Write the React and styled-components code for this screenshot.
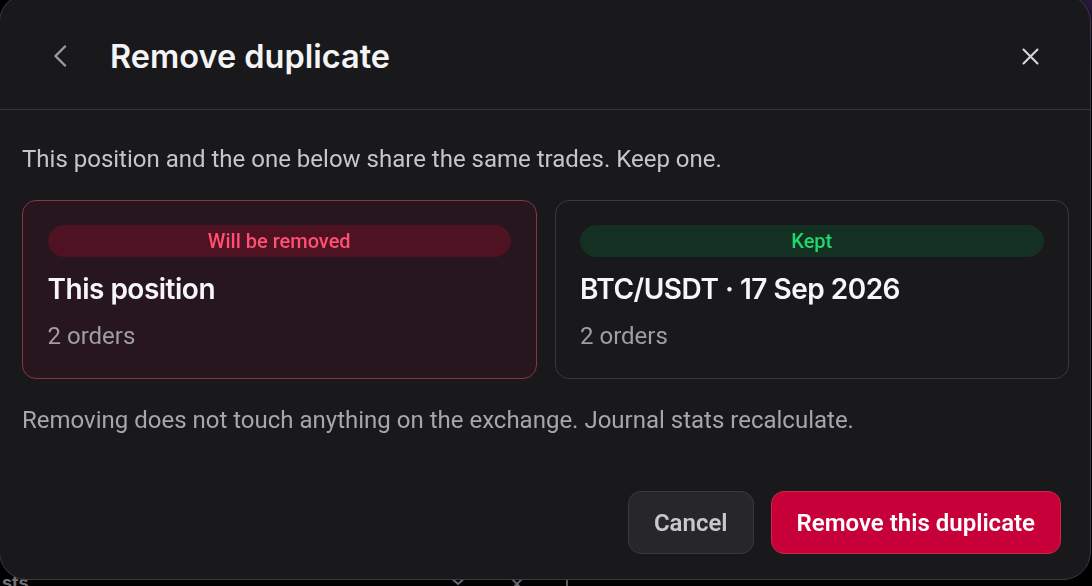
import React from "react";
import styled, { createGlobalStyle } from "styled-components";

const Global = createGlobalStyle`
  * { box-sizing: border-box; }
  html, body { margin: 0; padding: 0; background: #000; }
  body { font-family: "Roboto", "Liberation Sans", sans-serif; overflow: hidden; }
`;

const Page = styled.div`
  height: 100vh;
  background: radial-gradient(circle at 100% 0%, #2a1840 0, #000 60px);
  display: flex;
  flex-direction: column;
  justify-content: flex-end;
`;

const PageRow = styled.div`
  display: flex;
  align-items: flex-start;
  height: 10px;
  padding-left: 2px;
  color: #707074;
  font-family: "Inter", sans-serif;
  font-weight: 700;
  font-size: 18px;
  line-height: 18px;
`;

const PageLabel = styled.span`
  margin-top: -2px;
`;

const PageIcon = styled.span`
  display: flex;
  margin-left: ${(p) => p.$ml || 0}px;
`;

const Dialog = styled.div`
  position: fixed;
  top: -6px;
  left: -1px;
  width: 1092px;
  height: 586px;
  background: #19191b;
  border: 1px solid #3a3a42;
  border-radius: 28px;
  display: flex;
  flex-direction: column;
  overflow: hidden;
`;

const Header = styled.div`
  height: 115px;
  flex: none;
  display: flex;
  align-items: center;
  padding: 8px 40px 0 40px;
  border-bottom: 1px solid #34343a;
`;

const IconButton = styled.button`
  width: 40px;
  height: 40px;
  padding: 0;
  border: 0;
  background: transparent;
  display: flex;
  align-items: center;
  justify-content: center;
  cursor: pointer;
  flex: none;
`;

const Title = styled.h1`
  margin: 0 0 0 30px;
  flex: 1;
  font-family: "Inter", sans-serif;
  font-weight: 600;
  font-size: 32.5px;
  letter-spacing: 0;
  color: #f4f4f6;
`;

const Body = styled.div`
  flex: 1;
  display: flex;
  flex-direction: column;
  padding: 35px 21px 25px 22px;
`;

const Intro = styled.p`
  margin: 0;
  font-size: 24px;
  line-height: 28px;
  color: #c6c6ca;
`;

const Cards = styled.div`
  display: grid;
  grid-template-columns: 1fr 1fr;
  gap: 18px;
  margin-top: 27px;
`;

const Card = styled.div`
  border-radius: 14px;
  border: 1.5px solid ${(p) => (p.$tone === "remove" ? "#8a3447" : "#38383f")};
  background: ${(p) => (p.$tone === "remove" ? "#27161d" : "#19191b")};
  padding: 23.5px 24.5px 28px 24.5px;
`;

const Badge = styled.div`
  height: 32px;
  border-radius: 16px;
  display: flex;
  align-items: center;
  justify-content: center;
  font-size: 20px;
  font-weight: 500;
  background: ${(p) => (p.$tone === "remove" ? "#4e1222" : "#143022")};
  color: ${(p) => (p.$tone === "remove" ? "#ff4f72" : "#1fd66c")};
`;

const CardTitle = styled.div`
  margin-top: 14.5px;
  font-family: "Inter", sans-serif;
  font-weight: 600;
  font-size: 28px;
  letter-spacing: -0.5px;
  line-height: 36px;
  color: #f6f6f8;
`;

const CardMeta = styled.div`
  margin-top: 14.5px;
  font-size: 24px;
  line-height: 28px;
  color: #9e9ea4;
`;

const Note = styled.p`
  margin: 27px 0 0;
  font-size: 24px;
  line-height: 28px;
  color: #a6a6ab;
`;

const Actions = styled.div`
  margin-top: auto;
  display: flex;
  justify-content: flex-end;
  gap: 17px;
  padding-right: 8px;
`;

const Button = styled.button`
  height: 63px;
  padding: 0 25px;
  border-radius: 13px;
  font-family: "Roboto", sans-serif;
  font-size: 24px;
  font-weight: 600;
  cursor: pointer;
  border: 1.5px solid ${(p) => (p.$primary ? "#d4244e" : "#393940")};
  background: ${(p) => (p.$primary ? "#c8003a" : "#26262b")};
  color: ${(p) => (p.$primary ? "#ffffff" : "#c8c8cc")};
`;

const ChevronLeft = () => (
  <svg width="14" height="22" viewBox="0 0 14 22" fill="none">
    <polyline points="12,1.5 2.5,11 12,20.5" stroke="#9a9aa0" strokeWidth="2.4" strokeLinecap="round" strokeLinejoin="round" />
  </svg>
);

const CloseIcon = ({ size = 17, color = "#d6d6da", width = 2.1 }) => (
  <svg width={size} height={size} viewBox="0 0 17 17" fill="none">
    <path d="M1.5 1.5 L15.5 15.5 M15.5 1.5 L1.5 15.5" stroke={color} strokeWidth={width} strokeLinecap="round" />
  </svg>
);

const SmallChevron = () => (
  <svg width="18" height="10" viewBox="0 0 18 10" fill="none">
    <polyline points="1,1 9,8 17,1" stroke="#6a6a70" strokeWidth="2" strokeLinecap="round" />
  </svg>
);

const Bar = () => (
  <svg width="4" height="10" viewBox="0 0 4 10">
    <rect x="1" y="2" width="2" height="8" fill="#5a5a60" />
  </svg>
);

export default function App() {
  return (
    <>
      <Global />
      <Page>
        <PageRow>
          <PageLabel>sts</PageLabel>
          <PageIcon $ml={420}>
            <SmallChevron />
          </PageIcon>
          <PageIcon $ml={42}>
            <CloseIcon size={16} color="#6a6a70" width={2} />
          </PageIcon>
          <PageIcon $ml={40}>
            <Bar />
          </PageIcon>
        </PageRow>
      </Page>
      <Dialog role="dialog" aria-label="Remove duplicate">
        <Header>
          <IconButton aria-label="Back">
            <ChevronLeft />
          </IconButton>
          <Title>Remove duplicate</Title>
          <IconButton aria-label="Close">
            <CloseIcon />
          </IconButton>
        </Header>
        <Body>
          <Intro>This position and the one below share the same trades. Keep one.</Intro>
          <Cards>
            <Card $tone="remove">
              <Badge $tone="remove">Will be removed</Badge>
              <CardTitle>This position</CardTitle>
              <CardMeta>2 orders</CardMeta>
            </Card>
            <Card $tone="keep">
              <Badge $tone="keep">Kept</Badge>
              <CardTitle>BTC/USDT · 17 Sep 2026</CardTitle>
              <CardMeta>2 orders</CardMeta>
            </Card>
          </Cards>
          <Note>Removing does not touch anything on the exchange. Journal stats recalculate.</Note>
          <Actions>
            <Button>Cancel</Button>
            <Button $primary>Remove this duplicate</Button>
          </Actions>
        </Body>
      </Dialog>
    </>
  );
}
